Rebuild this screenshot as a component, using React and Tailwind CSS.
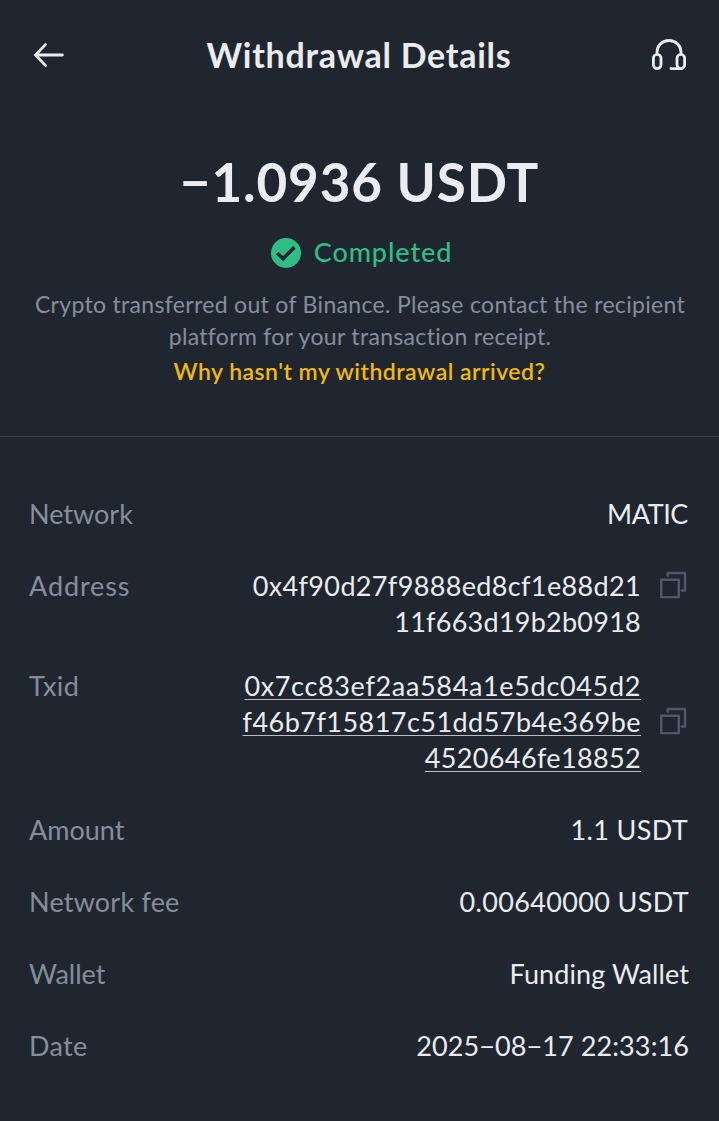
import React from "react";

const CopyIcon = () => (
  <svg width="28" height="28" viewBox="0 0 28 28" fill="none" stroke="#4f5867" strokeWidth="2.4" strokeLinejoin="round">
    <rect x="1.2" y="8.7" width="17.6" height="17.4" />
    <path d="M7.8 5.8V2H25V19.6h-4.4" />
  </svg>
);

const Row = ({ label, labelClass = "", children, className = "" }) => (
  <div className="flex justify-between text-[27px] leading-9">
    <span className={`text-[#848e9c] ${labelClass}`}>{label}</span>
    <div className={`text-right text-[#eaecef] ${className}`}>{children}</div>
  </div>
);

const App = () => {
  return (
    <div className="w-[719px] h-[1121px] bg-[#202630] font-['Lato',sans-serif] overflow-hidden">
      {/* Header */}
      <header className="flex items-center justify-between h-[110px] pl-[33px] pr-[32px]">
        <svg width="32" height="26" viewBox="0 0 32 26" fill="none" stroke="#eaecef" strokeWidth="2.8" strokeLinecap="round">
          <path d="M29.4 13H3M12.6 2.4L2.5 13L12.6 23.6" />
        </svg>
        <h1 className="pl-0.5 text-[34px] leading-10 tracking-[0.75px] font-bold text-[#eaecef]">Withdrawal Details</h1>
        <svg width="36" height="32" viewBox="0 0 36 32" fill="none" stroke="#eaecef" strokeWidth="2.8" strokeLinecap="round">
          <path d="M6 15v-2a12 11.5 0 0 1 24 0v2" />
          <rect x="2.4" y="15.4" width="7.6" height="14.2" rx="3.8" />
          <rect x="26" y="15.4" width="7.6" height="14.2" rx="3.8" />
          <path d="M20 29.6h9" />
        </svg>
      </header>

      {/* Summary */}
      <section className="flex flex-col items-center h-[327px] pt-10 border-b border-[#333b47] text-center">
        <div className="text-[53px] leading-[64px] tracking-[0.85px] font-bold text-[#eaecef]">−1.0936 USDT</div>
        <div className="flex items-center gap-[13px] mt-[21px] h-9 pl-1 text-[27px] leading-9 tracking-[0.9px] font-medium text-[#2ebd85]">
          <svg width="30" height="30" viewBox="0 0 30 30">
            <circle cx="15" cy="15" r="15" fill="#2ebd85" />
            <path d="M6.2 15L12 20.8L23.4 9.2" fill="none" stroke="#202630" strokeWidth="3.6" />
          </svg>
          <span className="pb-[3px]">Completed</span>
        </div>
        <p className="mt-[17px] pl-px text-[23px] leading-8 tracking-[0.32px] text-[#848e9c] whitespace-nowrap">
          Crypto transferred out of Binance. Please contact the recipient
          <br />
          platform for your transaction receipt.
        </p>
        <a href="#" className="mt-[3px] text-[23px] leading-8 tracking-[0.49px] font-semibold text-[#f0b90b]">
          Why hasn't my withdrawal arrived?
        </a>
      </section>

      {/* Details */}
      <section className="pl-[29px] pr-[31px] pt-[59px]">
        <Row label="Network" className="tracking-[-0.4px]">MATIC</Row>
        <div className="mt-9">
          <Row label="Address" labelClass="tracking-[0.9px]" className="flex items-start gap-[19px]">
            <span>
              <span className="tracking-[0.35px]">0x4f90d27f9888ed8cf1e88d21</span>
              <br />
              <span className="tracking-[0.25px]">11f663d19b2b0918</span>
            </span>
            <span className="pt-[3px]"><CopyIcon /></span>
          </Row>
        </div>
        <div className="mt-7">
          <Row label="Txid" labelClass="tracking-[0.4px]" className="flex items-center gap-[19px]">
            <span className="underline decoration-1 decoration-[#b9bcc1] underline-offset-3">
              <span className="tracking-[0.66px]">0x7cc83ef2aa584a1e5dc045d2</span>
              <br />
              <span className="tracking-[0.46px]">f46b7f15817c51dd57b4e369be</span>
              <br />
              <span className="tracking-[0.36px]">4520646fe18852</span>
            </span>
            <span className="mb-0.5"><CopyIcon /></span>
          </Row>
        </div>
        <div className="mt-9 flex flex-col gap-9">
          <Row label="Amount" className="tracking-[0.35px]">1.1 USDT</Row>
          <Row label="Network fee" labelClass="tracking-[0.2px]" className="-mr-px tracking-[0.35px]">0.00640000 USDT</Row>
          <Row label="Wallet" className="-mr-px tracking-[0.1px]">Funding Wallet</Row>
          <Row label="Date" labelClass="tracking-[0.3px]" className="-mr-px tracking-[0.1px]">2025−08−17 22:33:16</Row>
        </div>
      </section>
    </div>
  );
};

export default App;
